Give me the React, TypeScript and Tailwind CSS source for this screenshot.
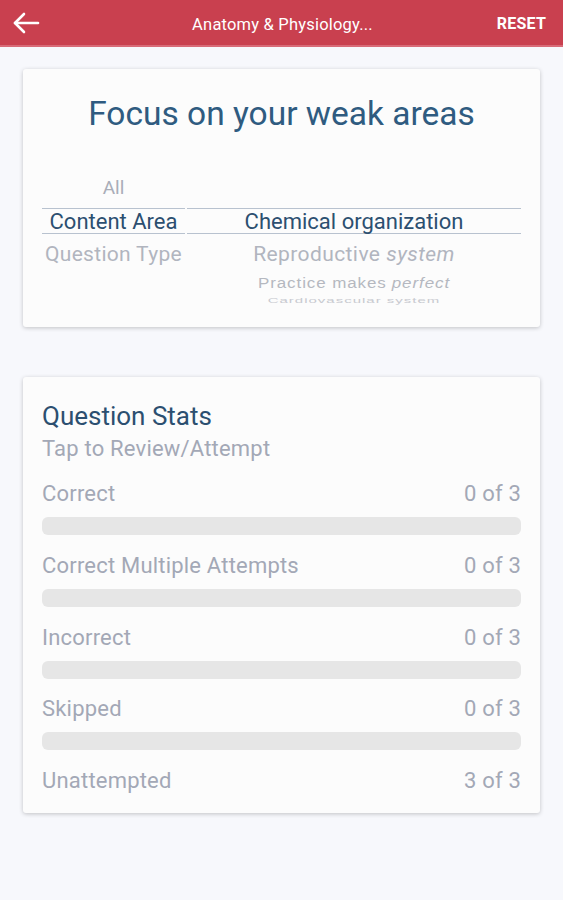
import React from "react";

const rows = [
  { label: "Correct", value: "0 of 3", bar: true },
  { label: "Correct Multiple Attempts", value: "0 of 3", bar: true },
  { label: "Incorrect", value: "0 of 3", bar: true },
  { label: "Skipped", value: "0 of 3", bar: true },
  { label: "Unattempted", value: "3 of 3", bar: false },
];

export default function App() {
  return (
    <div className="min-h-[900px] w-[563px] bg-[#f7f8fc]" style={{ fontFamily: "Roboto, 'Noto Sans', sans-serif" }}>
      <header className="h-[47px] bg-[#c9404f] border-b-2 border-[#d86b78] flex items-center px-[12px] relative">
        <svg width="28" height="24" viewBox="0 0 28 24" fill="none" stroke="white" strokeWidth="2.6" strokeLinecap="round" strokeLinejoin="round">
          <path d="M26 12H3" />
          <path d="M12 3L3 12L12 21" />
        </svg>
        <div className="absolute left-0 right-0 top-[13px] pl-[2px] text-center text-white text-[16.5px] tracking-[0.2px] pointer-events-none">Anatomy &amp; Physiology...</div>
        <div className="ml-auto mr-[5px] mt-[2px] text-white text-[16px] font-bold tracking-[0.2px]">RESET</div>
      </header>

      <div className="px-[23px] pt-[22px] flex flex-col gap-[50px]">
        <section className="bg-[#fcfcfc] rounded-[3px] shadow-[0_1px_4px_rgba(0,0,0,0.22)] h-[258px] px-[19px] pt-[25px]">
          <h1 className="text-center text-[33.5px] text-[#2f5b80] leading-[40px]">Focus on your weak areas</h1>
          <div className="mt-[36px] flex">
            <div className="w-[143px] flex flex-col items-center">
              <div className="h-[38px] pb-[2px] flex items-center text-[19px] text-[#a9adb8]">All</div>
              <div className="w-full h-[26px] border-y border-[#b8c2cf] flex items-center justify-center text-[22px] text-[#2c4f70]">Content Area</div>
              <div className="h-[42px] flex items-center text-[21px] text-[#b1b5bf] tracking-[0.3px]">Question Type</div>
            </div>
            <div className="ml-[2px] flex-1 flex flex-col items-center">
              <div className="h-[38px]" />
              <div className="w-full h-[26px] border-y border-[#b8c2cf] flex items-center justify-center text-[22px] text-[#2c4f70]">Chemical organization</div>
              <div className="h-[42px] flex items-center text-[21px] text-[#b1b5bf] tracking-[0.4px]">Reproductive <i className="ml-[6px]">system</i></div>
              <div className="h-[16px] flex items-center text-[17px] text-[#b5b8c0] tracking-[0.9px] scale-y-[0.82]" style={{ fontFamily: "'Liberation Sans', Arial, sans-serif" }}>Practice makes <i className="ml-[5px]">perfect</i></div>
              <div className="mt-[2px] h-[14px] flex items-center text-[15px] text-[#c8cad0] tracking-[1px] scale-y-[0.45]" style={{ fontFamily: "'Liberation Sans', Arial, sans-serif" }}>Cardiovascular system</div>
            </div>
          </div>
        </section>

        <section className="bg-[#fcfcfc] rounded-[3px] shadow-[0_1px_4px_rgba(0,0,0,0.22)] h-[436px] px-[19px] pt-[24px]">
          <h2 className="text-[26px] leading-[30px] text-[#2c4f70]">Question Stats</h2>
          <div className="mt-[5px] text-[22px] leading-[26px] text-[#a3a8b6] tracking-[0.2px]">Tap to Review/Attempt</div>
          <div className="mt-[19px] flex flex-col">
            {rows.map((r) => (
              <div key={r.label} className="h-[71.75px]">
                <div className="flex justify-between text-[22px] leading-[26px] text-[#a3a8b6] tracking-[0.2px]">
                  <span>{r.label}</span>
                  <span>{r.value}</span>
                </div>
                {r.bar && <div className="mt-[10px] h-[18px] rounded-[6px] bg-[#e6e6e6]" />}
              </div>
            ))}
          </div>
        </section>
      </div>
    </div>
  );
}
